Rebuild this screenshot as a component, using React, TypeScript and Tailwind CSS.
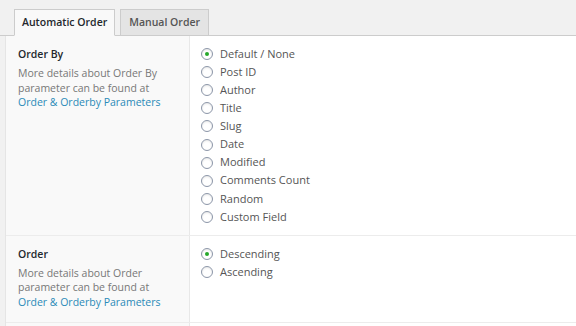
import React, { useState } from 'react';

const orderByOptions = [
  'Default / None',
  'Post ID',
  'Author',
  'Title',
  'Slug',
  'Date',
  'Modified',
  'Comments Count',
  'Random',
  'Custom Field',
];

const orderOptions = ['Descending', 'Ascending'];

const Radio: React.FC<{ checked: boolean; label: string; onClick: () => void }> = ({ checked, label, onClick }) => (
  <label onClick={onClick} className="flex items-center h-[18.1px] cursor-pointer">
    <span className="w-[12px] h-[12px] rounded-full border border-[#8c96a8] bg-white shadow-[inset_0_1px_2px_rgba(0,0,0,0.1)] flex items-center justify-center shrink-0">
      {checked && <span className="w-[4px] h-[4px] rounded-full bg-[#27a82b]" />}
    </span>
    <span className="ml-[7px] text-[11px] text-[#555]">{label}</span>
  </label>
);

const Row: React.FC<{
  title: string;
  param: string;
  options: string[];
  value: string;
  onChange: (v: string) => void;
}> = ({ title, param, options, value, onChange }) => (
  <div className="flex border-b border-[#ececec]">
    <div className="w-[184px] shrink-0 bg-[#f9f9f9] border-r border-[#e8e8e8] pl-[12px] pr-2 pt-[10px] pb-[13px]">
      <h3 className="text-[10.5px] font-semibold text-[#23282d] leading-[16px] mb-[4px]">{title}</h3>
      <p className="text-[10.5px] text-[#777] leading-[14.5px] whitespace-nowrap">
        More details about {param}
        <br />
        parameter can be found at
        <br />
        <a href="#" className="text-[#2a8ab8]">Order &amp; Orderby Parameters</a>
      </p>
    </div>
    <div className="flex-1 pl-[11px] pt-[9px] pb-[9px]">
      {options.map((o) => (
        <Radio key={o} label={o} checked={value === o} onClick={() => onChange(o)} />
      ))}
    </div>
  </div>
);

const App: React.FC = () => {
  const [tab, setTab] = useState<'auto' | 'manual'>('auto');
  const [orderBy, setOrderBy] = useState('Default / None');
  const [order, setOrder] = useState('Descending');

  return (
    <div className="h-screen flex flex-col bg-[#f1f1f1] pt-[9px] font-['Open_Sans',sans-serif] overflow-hidden">
      <div className="flex items-end gap-[5px] pl-[14px] border-b border-[#cccccc]">
        <button
          onClick={() => setTab('auto')}
          className={`h-[27px] px-[7px] -mb-px border border-[#cccccc] text-[10.5px] font-semibold ${tab === 'auto' ? 'bg-[#f9f9f9] border-b-[#f9f9f9] text-[#23282d]' : 'bg-[#e4e4e4] text-[#555]'}`}
        >
          Automatic Order
        </button>
        <button
          onClick={() => setTab('manual')}
          className={`h-[27px] px-[8px] -mb-px border border-[#cccccc] text-[10.5px] font-semibold ${tab === 'manual' ? 'bg-[#f9f9f9] border-b-[#f9f9f9] text-[#23282d]' : 'bg-[#e4e4e4] border-b-[#cccccc] text-[#555]'}`}
        >
          Manual Order
        </button>
      </div>
      <div className="flex-1 flex flex-col ml-[5px] bg-white border-l border-[#e5e5e5]">
        <Row title="Order By" param="Order By" options={orderByOptions} value={orderBy} onChange={setOrderBy} />
        <Row title="Order" param="Order" options={orderOptions} value={order} onChange={setOrder} />
        <div className="flex-1 flex">
          <div className="w-[184px] shrink-0 bg-[#f9f9f9] border-r border-[#e8e8e8]" />
          <div className="flex-1" />
        </div>
      </div>
    </div>
  );
};

export default App;
